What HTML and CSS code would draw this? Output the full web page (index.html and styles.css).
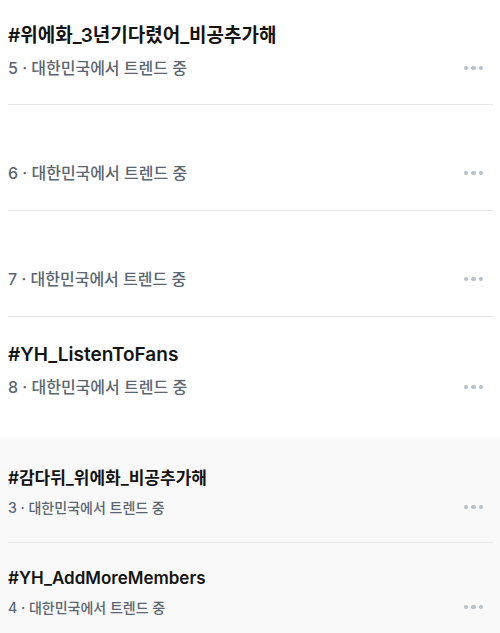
FILE: index.html
```html
<!DOCTYPE html>
<html lang="ko">

<head>
    <meta charset="UTF-8">
    <meta name="viewport" content="width=device-width, initial-scale=1.0">
    <title>트렌드</title>
    <link rel="stylesheet" href="styles.css">
</head>

<body>
    <!-- 위쪽 트렌드 목록 -->
    <div class="list">
        <div class="row">
            <div class="info">
                <div class="title">#위에화_3년기다렸어_비공추가해</div>
                <div class="sub">5 · 대한민국에서 트렌드 중</div>
            </div>
            <div class="more"><i></i><i></i><i></i></div>
        </div>
        <div class="row">
            <div class="info">
                <div class="title"></div>
                <div class="sub">6 · 대한민국에서 트렌드 중</div>
            </div>
            <div class="more"><i></i><i></i><i></i></div>
        </div>
        <div class="row">
            <div class="info">
                <div class="title"></div>
                <div class="sub">7 · 대한민국에서 트렌드 중</div>
            </div>
            <div class="more"><i></i><i></i><i></i></div>
        </div>
        <div class="row last">
            <div class="info">
                <div class="title">#YH_ListenToFans</div>
                <div class="sub">8 · 대한민국에서 트렌드 중</div>
            </div>
            <div class="more"><i></i><i></i><i></i></div>
        </div>
    </div>

    <!-- 아래쪽 트렌드 목록 (회색 배경) -->
    <div class="list small">
        <div class="row">
            <div class="info">
                <div class="title">#감다뒤_위에화_비공추가해</div>
                <div class="sub">3 · 대한민국에서 트렌드 중</div>
            </div>
            <div class="more"><i></i><i></i><i></i></div>
        </div>
        <div class="row last">
            <div class="info">
                <div class="title">#YH_AddMoreMembers</div>
                <div class="sub">4 · 대한민국에서 트렌드 중</div>
            </div>
            <div class="more"><i></i><i></i><i></i></div>
        </div>
    </div>
</body>

</html>
```

FILE: styles.css
```css
* {
    margin: 0;
    padding: 0;
    box-sizing: border-box;
}

html,
body {
    height: 100%;
}

body {
    background: #fff;
    font-family: Inter, "Noto Sans CJK KR", sans-serif;
    overflow: hidden;
}

.list {
    padding: 0 7px 0 8px;
}

.row {
    display: flex;
    align-items: flex-end;
    padding: 22px 0 25px;
    border-bottom: 1px solid #e7e7e7;
}

.row:first-child {
    padding-bottom: 24px;
}

.row.last {
    border-bottom: none;
    padding-top: 24px;
}

.info {
    flex: 1;
    display: flex;
    flex-direction: column;
    gap: 6px;
}

.title {
    height: 28px;
    line-height: 28px;
    font-size: 19px;
    font-weight: 600;
    color: #141414;
}

.sub {
    height: 24px;
    line-height: 24px;
    font-size: 16px;
    font-weight: 500;
    color: #5b6670;
}

.more {
    display: flex;
    gap: 3px;
    height: 24px;
    align-items: center;
    margin-right: 10px;
}

.more i {
    width: 4.5px;
    height: 4.5px;
    border-radius: 50%;
    background: #b8c0c8;
}

/* 아래쪽 목록 */
.small {
    background: #f9f9f9;
    margin-top: 14px;
    padding-top: 11px;
    min-height: 200px;
}

.small .row {
    padding: 16px 0 23px;
    border-bottom-color: #ececec;
}

.small .row.last {
    padding-top: 22px;
}

.small .title {
    font-size: 17px;
    height: 26px;
    line-height: 26px;
}

.small .sub {
    font-size: 14px;
    height: 22px;
    line-height: 22px;
}
```
